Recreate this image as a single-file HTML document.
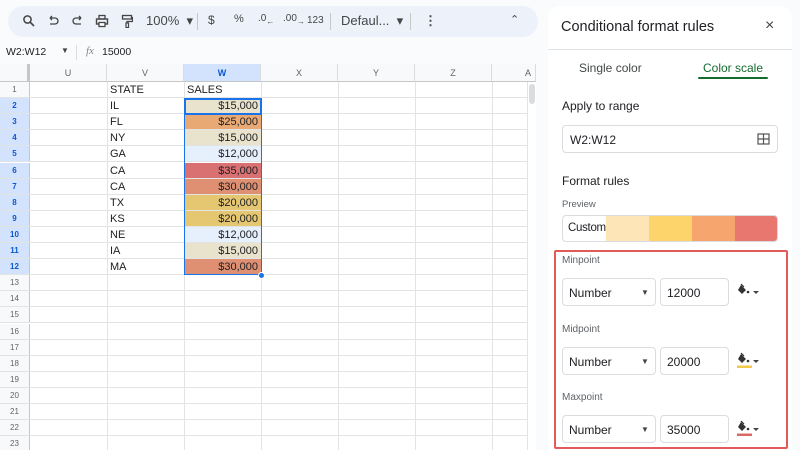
<!DOCTYPE html>
<html><head><meta charset="utf-8"><style>
*{box-sizing:border-box;margin:0;padding:0}
body{width:800px;height:450px;overflow:hidden;background:#f9fbfd;font-family:"Liberation Sans",Arial,sans-serif;position:relative;color:#202124}
.abs{position:absolute}
.pill{left:8px;top:6px;width:530px;height:31px;background:#edf2fa;border-radius:16px}
.tb{top:13px;font-size:13px;color:#444746}
.grid{left:0;top:64px;width:536px;height:386px;background:#fff;overflow:hidden}
.hdr{position:absolute;top:0;height:18px;font-size:9px;color:#5f6368;text-align:center;line-height:18px;background:#f8f9fa;border-right:1px solid #dadce0;border-bottom:1px solid #c4c7c5}
.row{position:absolute;left:0;width:536px;height:16.1px;border-bottom:1px solid #e2e3e3}
.rn{position:absolute;left:0;width:30px;height:100%;background:#f8f9fa;border-right:1px solid #c4c7c5;font-size:8px;color:#5f6368;text-align:center;line-height:16px}
.rn.s{background:#d3e3fd;color:#0b57d0;font-weight:bold}
.vl{position:absolute;top:18px;bottom:0;width:1px;background:#e2e3e3}
.c{position:absolute;font-size:11px;line-height:16px;top:0;height:15px}
.panel{left:548px;top:6px;width:244px;height:444px;background:#fff;border-radius:12px 12px 0 0}
.lab{font-size:12px;color:#202124}
.box{border:1px solid #dadce0;border-radius:4px;background:#fff;position:absolute}
</style></head><body>
<div class="abs pill"></div>
<svg class="abs" style="left:22px;top:14px" width="14" height="14" viewBox="0 0 14 14"><circle cx="5.5" cy="5.5" r="3.6" fill="none" stroke="#444" stroke-width="1.5"/><path d="M8 8l4 4" stroke="#444" stroke-width="1.6"/></svg>
<svg class="abs" style="left:47px;top:15px" width="12" height="12" viewBox="0 0 12 12"><path d="M3 3h5a3 3 0 010 6H3M3 3l2-2M3 3l2 2" fill="none" stroke="#444" stroke-width="1.3"/></svg>
<svg class="abs" style="left:72px;top:15px" width="12" height="12" viewBox="0 0 12 12"><path d="M9 3H4a3 3 0 000 6h5M9 3L7 1M9 3L7 5" fill="none" stroke="#444" stroke-width="1.3"/></svg>
<svg class="abs" style="left:95px;top:14px" width="14" height="14" viewBox="0 0 14 14"><rect x="1.5" y="5" width="11" height="5" fill="none" stroke="#444" stroke-width="1.4"/><rect x="4" y="1.5" width="6" height="3.5" fill="none" stroke="#444" stroke-width="1.3"/><rect x="4" y="8.5" width="6" height="4" fill="#fff" stroke="#444" stroke-width="1.3"/></svg>
<svg class="abs" style="left:121px;top:14px" width="12" height="14" viewBox="0 0 12 14"><rect x="1.5" y="1.5" width="9" height="3.5" fill="none" stroke="#444" stroke-width="1.3"/><path d="M10.5 3.5h1v4H6v2" fill="none" stroke="#444" stroke-width="1.2"/><rect x="5" y="9" width="2.5" height="4.5" fill="none" stroke="#444" stroke-width="1.2"/></svg>
<div class="abs tb" style="left:146px">100% &nbsp;▾</div>
<div class="abs" style="left:197px;top:13px;width:1px;height:17px;background:#c7c7c7"></div>
<div class="abs tb" style="left:208px;font-size:12px">$</div>
<div class="abs tb" style="left:234px;font-size:11px">%</div>
<div class="abs tb" style="left:258px;font-size:10px">.0<sub style="font-size:8px">←</sub></div>
<div class="abs tb" style="left:283px;font-size:10px">.00<sub style="font-size:8px">→</sub></div>
<div class="abs tb" style="left:307px;font-size:10px;top:15px">123</div>
<div class="abs" style="left:330px;top:13px;width:1px;height:17px;background:#c7c7c7"></div>
<div class="abs tb" style="left:341px">Defaul... &nbsp;▾</div>
<div class="abs" style="left:410px;top:13px;width:1px;height:17px;background:#c7c7c7"></div>
<div class="abs tb" style="left:424px;font-weight:bold">⋮</div>
<div class="abs tb" style="left:510px;font-size:11px">⌃</div>
<div class="abs" style="left:6px;top:46px;font-size:10.5px">W2:W12</div>
<div class="abs" style="left:61px;top:46px;font-size:8px;color:#444">▼</div>
<div class="abs" style="left:76px;top:45px;width:1px;height:15px;background:#dadce0"></div>
<div class="abs" style="left:86px;top:45px;font-size:11px;color:#888;font-style:italic;font-family:'Liberation Serif',serif">fx</div>
<div class="abs" style="left:102px;top:46px;font-size:10.5px">15000</div>

<div class="abs grid">
<div class="hdr" style="left:0;width:30px;border-right:3px solid #c4c7c5"></div>
<div class="hdr" style="left:30px;width:77px">U</div>
<div class="hdr" style="left:107px;width:77px">V</div>
<div class="hdr" style="left:184px;width:77px;background:#d3e3fd;color:#0b57d0;font-weight:bold">W</div>
<div class="hdr" style="left:261px;width:77px">X</div>
<div class="hdr" style="left:338px;width:77px">Y</div>
<div class="hdr" style="left:415px;width:77px">Z</div>
<div class="hdr" style="left:492px;width:44px;text-align:right;padding-right:4px">A</div>
<div id="rows"></div>
<div class="vl" style="left:107px"></div><div class="vl" style="left:184px"></div><div class="vl" style="left:261px"></div><div class="vl" style="left:338px"></div><div class="vl" style="left:415px"></div><div class="vl" style="left:492px"></div>
<div class="abs" style="left:527px;top:18px;width:9px;height:368px;background:#fff;border-left:1px solid #e2e3e3"></div>
<div class="abs" style="left:529px;top:20px;width:6px;height:20px;background:#dadce0;border-radius:3px"></div>
<div class="abs" style="left:184px;top:34px;width:78px;height:177px;border:1px solid #1a73e8;pointer-events:none"></div>
<div class="abs" style="left:184px;top:34px;width:78px;height:17px;border:2px solid #1a73e8"></div>
<div class="abs" style="left:258px;top:208px;width:7px;height:7px;border-radius:50%;background:#1a73e8;border:1px solid #fff"></div>
</div>

<div class="abs panel">
<div class="abs" style="left:13px;top:13px;font-size:14.5px">Conditional format rules</div>
<div class="abs" style="left:217px;top:11px;font-size:16px;color:#444">×</div>
<div class="abs" style="left:0;top:43px;width:244px;height:1px;background:#e0e3e7"></div>
<div class="abs" style="left:31px;top:55px;font-size:12px;color:#444746">Single color</div>
<div class="abs" style="left:155px;top:55px;font-size:12px;color:#146c2e">Color scale</div>
<div class="abs" style="left:150px;top:71px;width:70px;height:2px;background:#146c2e;border-radius:1px"></div>
<div class="abs lab" style="left:14px;top:93px">Apply to range</div>
<div class="box" style="left:14px;top:119px;width:216px;height:28px"></div>
<div class="abs" style="left:22px;top:127px;font-size:12px">W2:W12</div>
<svg class="abs" style="left:209px;top:127px" width="13" height="12" viewBox="0 0 13 12"><rect x="1" y="1" width="11" height="10" fill="none" stroke="#555" stroke-width="1.2"/><path d="M1 6h11M6.5 1v10" stroke="#555" stroke-width="1.2"/></svg>
<div class="abs lab" style="left:14px;top:168px">Format rules</div>
<div class="abs" style="left:14px;top:193px;font-size:9.5px;color:#5f6368">Preview</div>
<div class="box" style="left:14px;top:209px;width:216px;height:27px;overflow:hidden">
<div class="abs" style="left:43px;top:0;width:43px;height:27px;background:#fde5b8"></div>
<div class="abs" style="left:86px;top:0;width:43px;height:27px;background:#fdd36c"></div>
<div class="abs" style="left:129px;top:0;width:43px;height:27px;background:#f6a56f"></div>
<div class="abs" style="left:172px;top:0;width:44px;height:27px;background:#e8776f"></div>
<div class="abs" style="left:5px;top:6px;font-size:11.5px;letter-spacing:-0.3px">Custom</div>
</div>
</div>
<div class="abs" style="left:554px;top:250px;width:234px;height:199px;border:2px solid #e25b59;border-radius:2px"></div>
<div id="pts"></div>
<script>
var d=[["IL","$15,000","#e9e2cc"],["FL","$25,000","#e9a974"],["NY","$15,000","#e9e2cc"],["GA","$12,000","#e6effc"],["CA","$35,000","#d97071"],["CA","$30,000","#df8f72"],["TX","$20,000","#e6c771"],["KS","$20,000","#e6c771"],["NE","$12,000","#e6effc"],["IA","$15,000","#e9e2cc"],["MA","$30,000","#df8f72"]];
var h="";
for(var i=1;i<=23;i++){var t=18+(i-1)*16.1;h+='<div class="row" style="top:'+t+'px"><div class="rn'+(i>=2&&i<=12?' s':'')+'">'+i+'</div>';
if(i==1)h+='<div class="c" style="left:110px">STATE</div><div class="c" style="left:187px">SALES</div>';
if(i>=2&&i<=12){var r=d[i-2];h+='<div class="c" style="left:110px">'+r[0]+'</div><div class="c" style="left:185px;width:76px;background:'+r[2]+';text-align:right;padding-right:3px">'+r[1]+'</div>';}
h+='</div>';}
document.getElementById("rows").innerHTML=h;
var p=[["Minpoint",261,"12000",null],["Midpoint",330,"20000","#f2c94c"],["Maxpoint",398,"35000","#d96b66"]],q="";
p.forEach(function(a){var y=a[1];q+='<div class="abs" style="left:562px;top:'+(y-6)+'px;font-size:10px;color:#5f6368">'+a[0]+'</div>'+
'<div class="box" style="left:562px;top:'+(y+17)+'px;width:94px;height:28px"></div><div class="abs" style="left:569px;top:'+(y+25)+'px;font-size:12px">Number</div><div class="abs" style="left:641px;top:'+(y+27)+'px;font-size:8px;color:#444">▼</div>'+
'<div class="box" style="left:660px;top:'+(y+17)+'px;width:69px;height:28px"></div><div class="abs" style="left:667px;top:'+(y+25)+'px;font-size:12px">'+a[2]+'</div>'+
'<svg class="abs" style="left:737px;top:'+(y+22)+'px" width="24" height="16" viewBox="0 0 24 16"><path d="M3 2l5 5-4 4-4-4z" fill="#333" transform="translate(1,0)"/><path d="M4 1l3 3" stroke="#333" stroke-width="1.2"/><circle cx="11" cy="9" r="1.3" fill="#333"/><path d="M16 8h6l-3 3z" fill="#444"/>'+(a[3]?'<rect x="0" y="13.5" width="15" height="2.5" fill="'+a[3]+'"/>':'')+'</svg>';});
document.getElementById("pts").innerHTML=q;
</script>
</body></html>
